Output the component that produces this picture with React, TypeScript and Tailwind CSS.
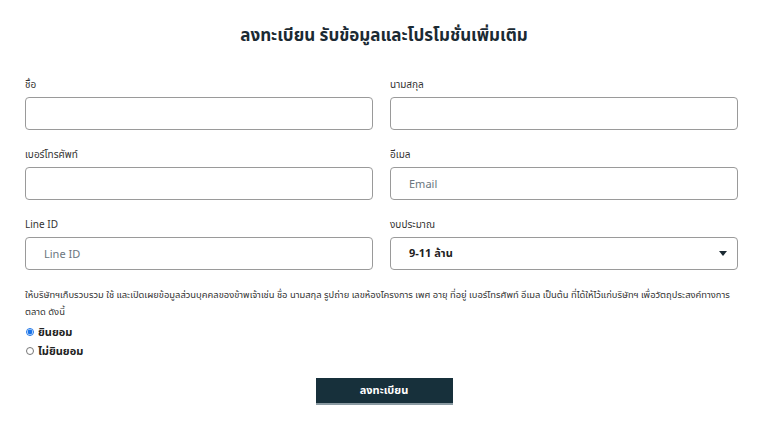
const font = { fontFamily: '"Noto Sans", "Noto Sans Thai", "Liberation Sans", sans-serif' };

function Field({ label, placeholder }: { label: string; placeholder?: string }) {
  return (
    <div className="flex flex-col">
      <label className="text-[10px] leading-[12px] text-[#333] mb-[7px]">{label}</label>
      <input
        placeholder={placeholder}
        className="h-[33px] w-full rounded-[4px] border border-[#9a9a9a] px-[18px] text-[11px] text-[#333] placeholder:text-[#6b7680] outline-none"
      />
    </div>
  );
}

export default function App() {
  return (
    <div className="bg-white w-[768px] h-[426px] overflow-hidden" style={font}>
      <h1 className="text-center text-[17px] font-bold text-[#1b2a33] pt-[22px] leading-[26px]">
        ลงทะเบียน รับข้อมูลและโปรโมชั่นเพิ่มเติม
      </h1>

      <div className="grid grid-cols-2 gap-x-[17px] gap-y-[18px] pl-[25px] pr-[30px] mt-[30px]">
        <Field label="ชื่อ" />
        <Field label="นามสกุล" />
        <Field label="เบอร์โทรศัพท์" />
        <Field label="อีเมล" placeholder="Email" />
        <Field label="Line ID" placeholder="Line ID" />
        <div className="flex flex-col">
          <label className="text-[10px] leading-[12px] text-[#333] mb-[7px]">งบประมาณ</label>
          <div className="h-[33px] rounded-[4px] border border-[#9a9a9a] pl-[18px] pr-[10px] flex items-center justify-between">
            <span className="text-[11px] font-bold text-[#222]">9-11 ล้าน</span>
            <svg width="8" height="5" viewBox="0 0 8 5">
              <path d="M0 0 L8 0 L4 5 Z" fill="#1b2a33" />
            </svg>
          </div>
        </div>
      </div>

      <p className="pl-[25px] pr-[10px] mt-[16px] text-[9.4px] leading-[17px] text-[#333]">
        <span className="whitespace-nowrap">
          ให้บริษัทฯเก็บรวบรวม ใช้ และเปิดเผยข้อมูลส่วนบุคคลของข้าพเจ้าเช่น ชื่อ นามสกุล รูปถ่าย เลขห้องโครงการ เพศ อายุ ที่อยู่ เบอร์โทรศัพท์ อีเมล เป็นต้น ที่ได้ให้ไว้แก่บริษัทฯ เพื่อวัตถุประสงค์ทางการ
        </span>
        <br />
        ตลาด ดังนี้
      </p>

      <div className="pl-[25px] mt-[2px] flex flex-col">
        <label className="flex items-center gap-[4px] text-[11px] font-bold text-[#222] leading-[19px]">
          <input type="radio" name="consent" defaultChecked className="w-[8px] h-[8px] m-0 ml-[1px] accent-[#1a73e8]" />
          ยินยอม
        </label>
        <label className="flex items-center gap-[4px] text-[11px] font-bold text-[#222] leading-[19px]">
          <input type="radio" name="consent" className="w-[8px] h-[8px] m-0 ml-[1px]" />
          ไม่ยินยอม
        </label>
      </div>

      <div className="flex justify-center mt-[18px]">
        <button className="w-[137px] h-[27px] bg-[#17303b] text-white text-[11px] font-bold border-b-2 border-[#8a9aa2]">
          ลงทะเบียน
        </button>
      </div>
    </div>
  );
}
